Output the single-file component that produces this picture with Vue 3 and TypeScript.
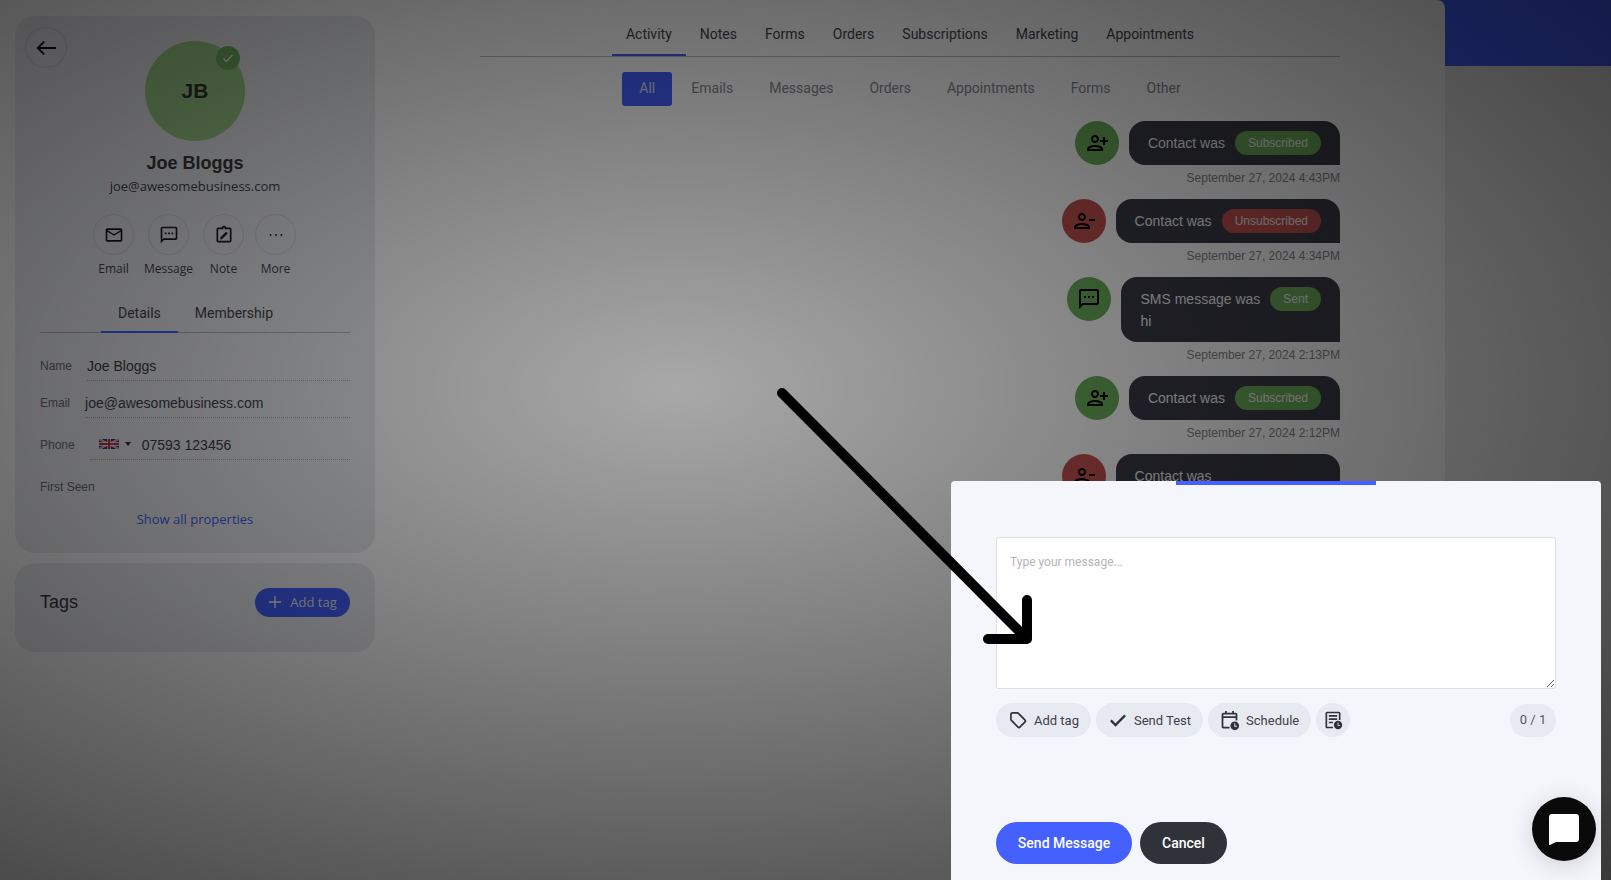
<script setup lang="ts">
const mainTabs = ['Activity', 'Notes', 'Forms', 'Orders', 'Subscriptions', 'Marketing', 'Appointments']
const filters = ['All', 'Emails', 'Messages', 'Orders', 'Appointments', 'Forms', 'Other']
const PERSON = 'M14 8c0-2.21-1.79-4-4-4S6 5.79 6 8s1.79 4 4 4 4-1.79 4-4zm-2 0c0 1.1-.9 2-2 2s-2-.9-2-2 .9-2 2-2 2 .9 2 2zM2 18v2h16v-2c0-2.66-5.33-4-8-4s-8 1.34-8 4zm2 0c.2-.71 3.3-2 6-2 2.69 0 5.77 1.28 6 2H4z'
const ADD = PERSON + 'M20 9V6h-2v3h-3v2h3v3h2v-3h3V9h-3z'
const REMOVE = PERSON + 'M17 10h6v2h-6z'
const SMS = 'M20 2H4c-1.1 0-2 .9-2 2v18l4-4h14c1.1 0 2-.9 2-2V4c0-1.1-.9-2-2-2zm0 14H5.17L4 17.17V4h16v12zM7 9h2v2H7zm4 0h2v2h-2zm4 0h2v2h-2z'
const feed = [
  { id: 1, tone: 'green', icon: ADD, text: 'Contact was', pill: 'Subscribed', time: 'September 27, 2024 4:43PM' },
  { id: 2, tone: 'red', icon: REMOVE, text: 'Contact was', pill: 'Unsubscribed', time: 'September 27, 2024 4:34PM' },
  { id: 3, tone: 'green', icon: SMS, text: 'SMS message was', pill: 'Sent', body: 'hi', time: 'September 27, 2024 2:13PM' },
  { id: 4, tone: 'green', icon: ADD, text: 'Contact was', pill: 'Subscribed', time: 'September 27, 2024 2:12PM' },
  { id: 5, tone: 'red', icon: REMOVE, text: 'Contact was', pill: 'Unsubscribed', ghost: true, time: '' }
]
</script>

<template>
  <div class="stage">
    <div class="blue-head"></div>

    <div class="page">
      <aside class="side">
        <section class="card profile">
          <button class="back" aria-label="Back">
            <svg width="22" height="22" viewBox="0 0 24 24" fill="none" stroke="#111" stroke-width="2"><path d="M23 12H3M10 5l-7 7 7 7" /></svg>
          </button>
          <div class="avatar">
            <span>JB</span>
            <i class="verified">
              <svg width="12" height="12" viewBox="0 0 24 24" fill="none" stroke="#fff" stroke-width="2.4"><path d="M3 13l6 6L21 6" /></svg>
            </i>
          </div>
          <h1 class="name">Joe Bloggs</h1>
          <p class="mail">joe@awesomebusiness.com</p>

          <div class="actions">
            <div class="action a-email">
              <span class="round">
                <svg width="20" height="20" viewBox="0 0 24 24"><path d="M22 6c0-1.1-.9-2-2-2H4c-1.1 0-2 .9-2 2v12c0 1.1.9 2 2 2h16c1.1 0 2-.9 2-2V6zm-2 0l-8 5-8-5h16zm0 12H4V8l8 5 8-5v10z" /></svg>
              </span>
              <label>Email</label>
            </div>
            <div class="action a-msg">
              <span class="round">
                <svg width="20" height="20" viewBox="0 0 24 24"><path :d="SMS" /></svg>
              </span>
              <label>Message</label>
            </div>
            <div class="action a-note">
              <span class="round">
                <svg width="20" height="20" viewBox="0 0 24 24"><path d="M19 3h-4.18C14.4 1.84 13.3 1 12 1s-2.4.84-2.82 2H5c-1.1 0-2 .9-2 2v14c0 1.1.9 2 2 2h14c1.1 0 2-.9 2-2V5c0-1.1-.9-2-2-2zm-7 0c.55 0 1 .45 1 1s-.45 1-1 1-1-.45-1-1 .45-1 1-1zM5 19V5h14v14H5zM7.5 15l7-7 2 2-7 7h-2z" /></svg>
              </span>
              <label>Note</label>
            </div>
            <div class="action a-more">
              <span class="round">
                <svg width="20" height="20" viewBox="0 0 24 24"><circle cx="5.5" cy="12" r="1.1" /><circle cx="12" cy="12" r="1.1" /><circle cx="18.5" cy="12" r="1.1" /></svg>
              </span>
              <label>More</label>
            </div>
          </div>

          <div class="side-tabs">
            <span class="side-tab active">Details</span>
            <span class="side-tab">Membership</span>
          </div>

          <div class="field f-name">
            <span class="f-label">Name</span>
            <span class="f-value">Joe Bloggs</span>
          </div>
          <div class="field f-email">
            <span class="f-label">Email</span>
            <span class="f-value">joe@awesomebusiness.com</span>
          </div>
          <div class="field f-phone">
            <span class="f-label">Phone</span>
            <span class="f-value phone">
              <svg class="flag" width="20" height="10" viewBox="0 0 60 30">
                <rect width="60" height="30" fill="#2c3a8c" />
                <path d="M0 0l60 30M60 0L0 30" stroke="#fff" stroke-width="6" />
                <path d="M0 0l60 30M60 0L0 30" stroke="#d0303c" stroke-width="2" />
                <path d="M30 0v30M0 15h60" stroke="#fff" stroke-width="10" />
                <path d="M30 0v30M0 15h60" stroke="#d0303c" stroke-width="6" />
              </svg>
              <i class="caret"></i>
              <span>07593 123456</span>
            </span>
          </div>
          <div class="field f-seen">
            <span class="f-label">First Seen</span>
          </div>
          <a class="show-all">Show all properties</a>
        </section>

        <section class="card tags">
          <h2>Tags</h2>
          <button class="add-tag">
            <svg width="14" height="14" viewBox="0 0 14 14" fill="none" stroke="#fff" stroke-width="1.3"><path d="M7 1v12M1 7h12" /></svg>
            Add tag
          </button>
        </section>
      </aside>

      <main class="main">
        <nav class="main-tabs">
          <span v-for="(t, i) in mainTabs" :key="t" class="main-tab" :class="{ active: i === 0 }">{{ t }}</span>
        </nav>
        <nav class="filters">
          <span v-for="(f, i) in filters" :key="f" class="filter" :class="{ active: i === 0 }">{{ f }}</span>
        </nav>
        <div class="feed">
          <div v-for="e in feed" :key="e.id" class="entry">
            <div class="entry-row">
              <span class="entry-icon" :class="e.tone">
                <svg width="24" height="24" viewBox="0 0 24 24"><path :d="e.icon" /></svg>
              </span>
              <div class="bubble">
                <div class="bubble-line">
                  <span>{{ e.text }}</span>
                  <span class="pill" :class="[e.tone, { ghost: e.ghost }]">{{ e.pill }}</span>
                </div>
                <div v-if="e.body" class="bubble-body">{{ e.body }}</div>
              </div>
            </div>
            <div class="stamp">{{ e.time }}</div>
          </div>
        </div>
      </main>
    </div>

    <div class="overlay"></div>

    <section class="modal">
      <i class="modal-bar"></i>
      <textarea class="msg" placeholder="Type your message..."></textarea>
      <div class="chips">
        <span class="chip c-tag">
          <svg width="20" height="20" viewBox="0 0 24 24" fill="none" stroke="#2f323b" stroke-width="2" stroke-linejoin="round"><path d="M3.5 5.500c0-1.100.9-2 2-2h5.600c.5 0 1 .2 1.400.6l7.700 7.700c.8.8.8 2 0 2.800l-5.700 5.700c-.8.8-2 .8-2.800 0L4.100 12.500c-.4-.4-.6-.9-.6-1.400z" /></svg>
          Add tag
        </span>
        <span class="chip c-test">
          <svg width="20" height="20" viewBox="0 0 24 24" fill="none" stroke="#2f323b" stroke-width="2.8"><path d="M3.500 12.500 9 18 20.500 6.500" /></svg>
          Send Test
        </span>
        <span class="chip c-sched">
          <svg width="21" height="21" viewBox="0 0 24 24" fill="#2f323b"><path d="M7 1h2v2h6V1h2v2h2c1.100 0 2 .9 2 2v7h-2V9H5v10h7v2H5c-1.100 0-2-.9-2-2V5c0-1.100.9-2 2-2h2zM5 5v2h14V5z" /><circle cx="18" cy="18" r="5" /><path d="M17.500 15h1v3h2v1h-3z" fill="#e8eaf2" /></svg>
          Schedule
        </span>
        <span class="chip c-icon">
          <svg width="20" height="20" viewBox="0 0 24 24" fill="#2f323b"><path d="M5 2h14c1.100 0 2 .9 2 2v8h-2V4H5v16h7v2H5c-1.100 0-2-.9-2-2V4c0-1.100.9-2 2-2zm2 4h10v2H7zm0 4h10v2H7zm0 4h5v2H7z" /><circle cx="18" cy="18" r="5" /><path d="M17.500 15h1v3h2v1h-3z" fill="#e8eaf2" /></svg>
        </span>
        <span class="count">0 / 1</span>
      </div>
      <div class="modal-actions">
        <button class="btn send">Send Message</button>
        <button class="btn cancel">Cancel</button>
      </div>
    </section>

    <button class="chat" aria-label="Chat">
      <svg width="32" height="32" viewBox="0 0 32 32"><path fill="#fff" d="M4 1h24c1.700 0 3 1.300 3 3v22c0 1.700-1.300 3-3 3H9c-1 0-2 .4-3 1l-4 2c-.5.200-1 0-1-.6V4c0-1.700 1.300-3 3-3z" /></svg>
    </button>

    <svg class="arrow" width="1611" height="880" viewBox="0 0 1611 880" fill="none" stroke="#000" stroke-width="10" stroke-linecap="round" stroke-linejoin="round">
      <path d="M782 393 1025 637" />
      <path d="M1027 600V639H988" />
    </svg>
  </div>
</template>

<style>
html, body { margin: 0; background: #e9e9ec; }
</style>

<style scoped>
.stage {
  position: relative;
  width: 1611px;
  height: 880px;
  overflow: hidden;
  background: #eeeef0;
  font-family: "Liberation Sans", Arial, sans-serif;
}
.blue-head {
  position: absolute;
  top: 0;
  right: 0;
  width: 200px;
  height: 66px;
  background: #4460ff;
}
.page {
  position: relative;
  display: flex;
  width: 1445px;
  height: 880px;
  background: #fff;
  border-top-right-radius: 8px;
}
.side {
  flex: none;
  width: 360px;
  margin-left: 15px;
  padding-top: 16px;
  display: flex;
  flex-direction: column;
  gap: 10px;
}
.card {
  background: #ecedf0;
  border-radius: 20px;
  box-sizing: border-box;
}
.profile {
  position: relative;
  height: 537px;
  padding: 25px 25px 0;
  display: flex;
  flex-direction: column;
  align-items: center;
}
.back {
  position: absolute;
  left: 10px;
  top: 11px;
  width: 42px;
  height: 41px;
  padding: 0;
  display: flex;
  align-items: center;
  justify-content: center;
  background: transparent;
  border: 1px solid #d6d7dc;
  border-radius: 50%;
}
.avatar {
  position: relative;
  flex: none;
  width: 100px;
  height: 100px;
  border-radius: 50%;
  background: #9fd08a;
  display: flex;
  align-items: center;
  justify-content: center;
}
.avatar span { font-size: 21px; font-weight: 700; color: #333; }
.verified {
  position: absolute;
  top: 5px;
  right: 5px;
  width: 24px;
  height: 24px;
  border-radius: 50%;
  background: #74b264;
  display: flex;
  align-items: center;
  justify-content: center;
}
.name {
  margin: 12px 0 0;
  font-size: 18px;
  line-height: 21px;
  font-weight: 700;
  color: #3a3a3a;
}
.mail {
  margin: 3px 0 0;
  font: 13px/18px "Open Sans", sans-serif;
  color: #3f4451;
}
.actions {
  margin-top: 19px;
  margin-left: -1px;
  display: flex;
  align-items: flex-start;
}
.action {
  display: flex;
  flex-direction: column;
  align-items: center;
  width: 41px;
}
.a-email, .a-msg { margin-right: 14px; }
.a-note { margin-right: 11px; }
.round {
  width: 41px;
  height: 41px;
  box-sizing: border-box;
  border: 1px solid #d6d7dc;
  border-radius: 50%;
  display: flex;
  align-items: center;
  justify-content: center;
}
.round svg { fill: #1b1b1f; }
.action label {
  margin-top: 5px;
  white-space: nowrap;
  font: 12px/17px "Open Sans", sans-serif;
  color: #3f4451;
}
.side-tabs {
  align-self: stretch;
  margin-top: 20px;
  padding-left: 61px;
  height: 36px;
  border-bottom: 1px solid #b5b6bd;
  display: flex;
  box-sizing: border-box;
}
.side-tab {
  font: 14px/33px Roboto, sans-serif;
  color: #44464e;
  padding: 0 17px;
  height: 36px;
  box-sizing: border-box;
}
.side-tab.active { border-bottom: 2px solid #4460ff; }
.field {
  align-self: stretch;
  display: flex;
  gap: 15px;
  align-items: flex-start;
}
.f-label {
  flex: none;
  font-size: 12px;
  line-height: 17px;
  color: #6d6e73;
}
.f-value {
  flex: 1;
  font-size: 14px;
  line-height: 20px;
  height: 30px;
  padding-top: 5px;
  box-sizing: border-box;
  color: #3f3f3f;
  border-bottom: 1px dotted #a9aab0;
}
.f-name { margin-top: 18px; }
.f-name .f-label { margin-top: 7px; }
.f-email { margin-top: 7px; }
.f-email .f-label { margin-top: 7px; }
.f-email .f-value { color: #3f424e; }
.f-phone { margin-top: 12px; }
.f-phone .f-label { margin-top: 7px; }
.phone {
  display: flex;
  align-items: flex-start;
  padding-top: 3px;
  padding-left: 9px;
}
.flag { margin-top: 6px; }
.caret {
  margin: 9px 0 0 6px;
  border: 3px solid transparent;
  border-top: 4px solid #3a3a3a;
  border-bottom: 0;
}
.phone span { margin-left: 11px; line-height: 24px; }
.f-seen { margin-top: 19px; }
.show-all {
  margin-top: 14px;
  font: 13px/18px "Open Sans", sans-serif;
  color: #4460ff;
}
.tags {
  height: 89px;
  padding: 0 25px;
  display: flex;
  align-items: center;
  justify-content: space-between;
}
.tags h2 { margin: 0 0 11px; font-size: 18px; font-weight: 400; color: #3a3a3a; }
.add-tag {
  margin-bottom: 11px;
  width: 95px;
  height: 29px;
  border: 0;
  border-radius: 15px;
  background: #4460ff;
  color: #e8e8ee;
  font: 13px "Open Sans", sans-serif;
  display: flex;
  align-items: center;
  justify-content: center;
  gap: 8px;
  padding: 0;
}
.main {
  flex: none;
  width: 860px;
  margin-left: 105px;
}
.main-tabs {
  height: 57px;
  box-sizing: border-box;
  border-bottom: 1px solid #b9bac0;
  display: flex;
  justify-content: center;
  padding-top: 24px;
}
.main-tab {
  height: 32px;
  box-sizing: border-box;
  padding: 0 14px;
  font: 14px/20px Roboto, sans-serif;
  color: #44464e;
  white-space: nowrap;
}
.main-tab.active { border-bottom: 2px solid #4460ff; }
.filters {
  display: flex;
  justify-content: center;
  margin-top: 15px;
}
.filter {
  height: 34px;
  padding: 0 18px;
  font: 14px/32px Roboto, sans-serif;
  color: #85878f;
  border-radius: 3px;
  white-space: nowrap;
}
.filter.active { background: #4460ff; color: #d8daf0; padding: 0 17px; margin: 0 1px; }
.feed {
  margin-top: 15px;
  display: flex;
  flex-direction: column;
  align-items: flex-end;
  gap: 12px;
}
.entry { display: flex; flex-direction: column; align-items: flex-end; }
.entry-row { display: flex; align-items: flex-start; gap: 10px; }
.entry-icon {
  flex: none;
  width: 44px;
  height: 44px;
  border-radius: 50%;
  display: flex;
  align-items: center;
  justify-content: center;
}
.entry-icon.green { background: #6cae5a; }
.entry-icon.red { background: #c45050; }
.bubble {
  box-sizing: border-box;
  min-height: 44px;
  padding: 10px 19px;
  background: #3a3b46;
  color: #f4f4f4;
  border-radius: 16px 16px 0 16px;
  font-size: 14px;
}
.bubble-line { display: flex; align-items: center; gap: 10px; height: 24px; }
.bubble-body { margin-top: 2px; margin-bottom: 2px; line-height: 17px; height: 17px; }
.pill {
  height: 24px;
  padding: 0 13px;
  border-radius: 12px;
  font-size: 12px;
  line-height: 24px;
  color: #f0f0f0;
}
.pill.green { background: #6cae5a; }
.pill.red { background: #c45050; }
.pill.ghost { visibility: hidden; }
.stamp {
  margin-top: 5px;
  min-height: 17px;
  font-size: 12px;
  line-height: 17px;
  color: #85858b;
}
.overlay {
  position: absolute;
  inset: 0;
  background: radial-gradient(ellipse farthest-corner at 42% 44%, rgba(0, 0, 0, 0.34) 0, rgba(0, 0, 0, 0.76) 100%);
}
.modal {
  position: absolute;
  left: 951px;
  top: 481px;
  width: 650px;
  height: 399px;
  box-sizing: border-box;
  padding: 56px 45px 0;
  background: #f5f6fb;
  border-radius: 4px 4px 0 0;
}
.modal-bar {
  position: absolute;
  left: 225px;
  top: 0;
  width: 200px;
  height: 4px;
  background: #4460ff;
}
.msg {
  display: block;
  width: 100%;
  height: 152px;
  box-sizing: border-box;
  padding: 17px 13px;
  margin: 0;
  background: #fff;
  border: 1px solid #dedfe3;
  border-radius: 2px;
  font: 12px Roboto, sans-serif;
  outline: none;
}
.msg::placeholder { color: #b4b4b8; }
.chips {
  margin-top: 14px;
  display: flex;
  align-items: center;
  gap: 5px;
  height: 34px;
}
.chip {
  height: 34px;
  box-sizing: border-box;
  border-radius: 17px;
  background: #e8eaf2;
  display: flex;
  align-items: center;
  gap: 6px;
  padding: 0 12px;
  font: 13px Roboto, sans-serif;
  color: #3d4048;
  white-space: nowrap;
}
.c-sched { padding-left: 11px; padding-right: 12px; }
.c-icon { width: 34px; padding: 0 7px; }
.count {
  margin-left: auto;
  width: 46px;
  height: 33px;
  border-radius: 17px;
  background: #e8eaf2;
  font: 13px/32px Roboto, sans-serif;
  text-align: center;
  color: #55585f;
}
.modal-actions {
  margin-top: 85px;
  display: flex;
  gap: 8px;
}
.btn {
  height: 42px;
  border: 0;
  border-radius: 21px;
  color: #fff;
  font: 500 14px Roboto, sans-serif;
  padding: 0 0 1px;
}
.send { width: 136px; background: #4460ff; }
.cancel { width: 87px; background: #30323a; }
.chat {
  position: absolute;
  left: 1532px;
  top: 797px;
  width: 64px;
  height: 64px;
  padding: 0;
  border: 0;
  border-radius: 50%;
  background: #0a0a0a;
  box-shadow: 0 4px 24px rgba(0, 0, 0, 0.16);
  display: flex;
  align-items: center;
  justify-content: center;
}
.arrow {
  position: absolute;
  left: 0;
  top: 0;
  pointer-events: none;
}
</style>
